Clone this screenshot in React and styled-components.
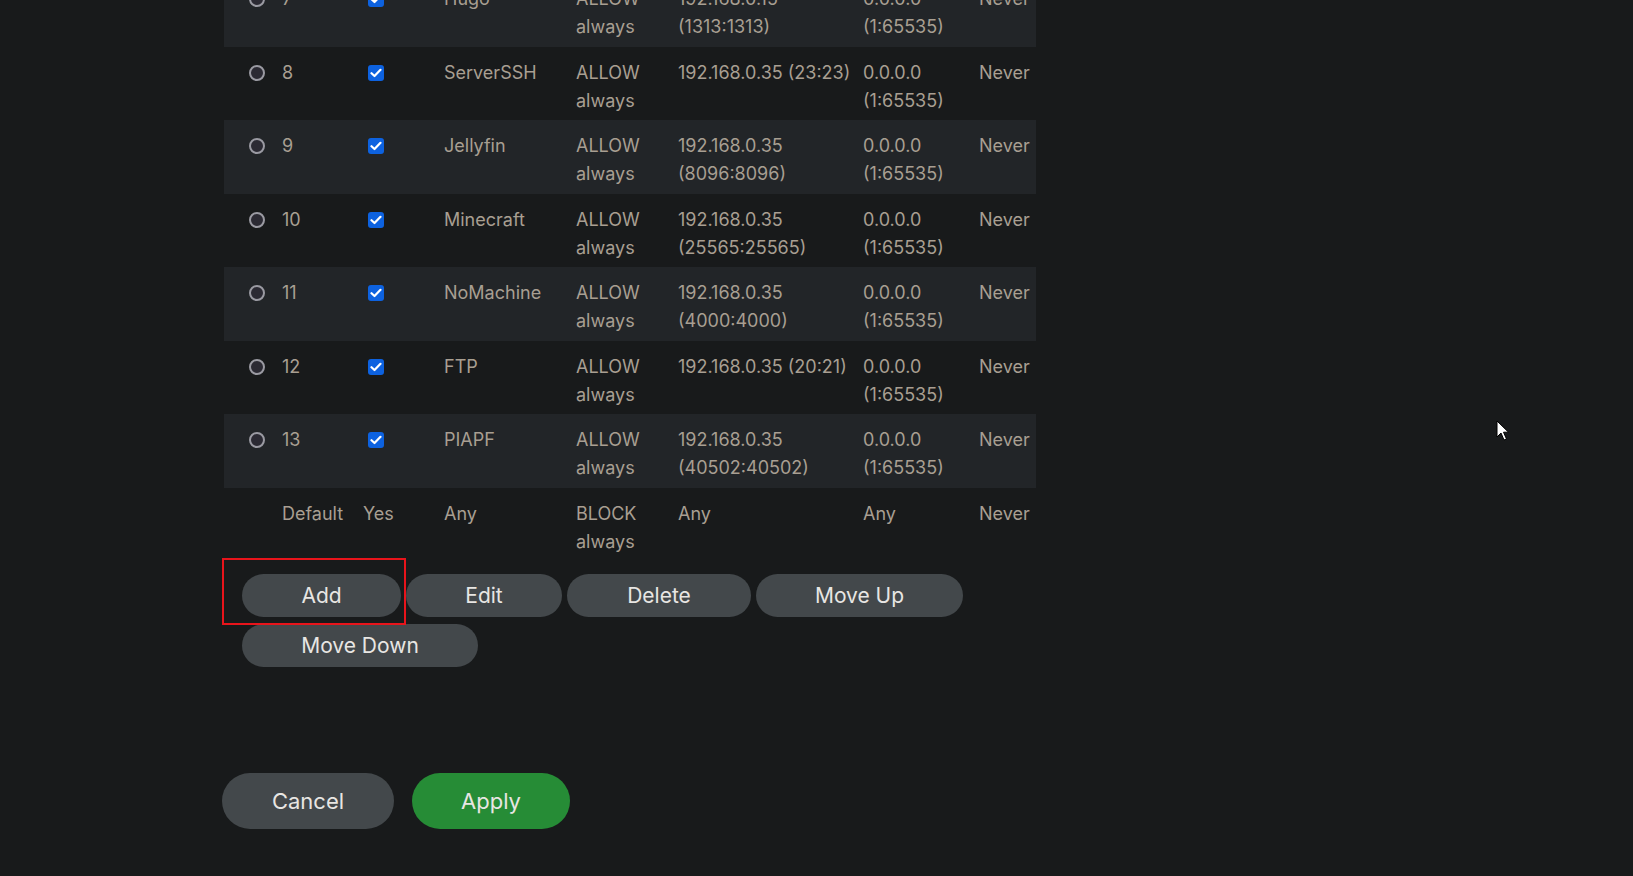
import React from "react";
import styled, { createGlobalStyle } from "styled-components";

const GlobalStyle = createGlobalStyle`
	html, body {
		margin: 0;
		padding: 0;
		background: #181a1b;
		height: 100%;
		overflow: hidden;
	}
	body {
		font-family: Inter, "Noto Sans", sans-serif;
		color: #e8e6e3;
	}
`;

const rules = [
	{ id: 7, name: "Hugo", dest: "192.168.0.15", port: "(1313:1313)" },
	{ id: 8, name: "ServerSSH", dest: "192.168.0.35 (23:23)", port: "" },
	{ id: 9, name: "Jellyfin", dest: "192.168.0.35", port: "(8096:8096)" },
	{ id: 10, name: "Minecraft", dest: "192.168.0.35", port: "(25565:25565)" },
	{ id: 11, name: "NoMachine", dest: "192.168.0.35", port: "(4000:4000)" },
	{ id: 12, name: "FTP", dest: "192.168.0.35 (20:21)", port: "" },
	{ id: 13, name: "PIAPF", dest: "192.168.0.35", port: "(40502:40502)" },
];

export default function App() {
	return (
		<Page>
			<GlobalStyle />
			<Content>
				<Table>
					<colgroup>
						<col style={{ width: 53 }} />
						<col style={{ width: 81 }} />
						<col style={{ width: 81 }} />
						<col style={{ width: 132 }} />
						<col style={{ width: 102 }} />
						<col style={{ width: 185 }} />
						<col style={{ width: 116 }} />
						<col style={{ width: 62 }} />
					</colgroup>
					<tbody>
						{rules.map((r, i) => (
							<Row key={r.id} $alt={i % 2 === 0}>
								<RadioCell>
									<Radio />
								</RadioCell>
								<Cell>{r.id}</Cell>
								<Cell>
									<Check>
										<svg width="12" height="10" viewBox="0 0 12 10">
											<path d="M1.5 5.2 L4.5 8 L10.5 1.8" fill="none" stroke="#fff" strokeWidth="2.2" strokeLinecap="round" strokeLinejoin="round" />
										</svg>
									</Check>
								</Cell>
								<Cell>{r.name}</Cell>
								<Cell>ALLOW<br />always</Cell>
								<Cell>
									{r.dest}
									{r.port && <br />}
									{r.port}
								</Cell>
								<Cell>0.0.0.0<br />(1:65535)</Cell>
								<Cell>Never</Cell>
							</Row>
						))}
						<Row>
							<Cell />
							<Cell>Default</Cell>
							<Cell>Yes</Cell>
							<Cell>Any</Cell>
							<Cell>BLOCK<br />always</Cell>
							<Cell>Any</Cell>
							<Cell>Any</Cell>
							<Cell>Never</Cell>
						</Row>
					</tbody>
				</Table>

				<ButtonBar>
					<Marked>
						<Button $w={159}>Add</Button>
						<RedBox />
					</Marked>
					<Button $w={156}>Edit</Button>
					<Button $w={184}>Delete</Button>
					<Button $w={207}>Move Up</Button>
					<Button $w={236}>Move Down</Button>
				</ButtonBar>

				<Footer>
					<BigButton $w={172}>Cancel</BigButton>
					<BigButton $w={158} $primary>Apply</BigButton>
				</Footer>
			</Content>

			<Cursor width="14" height="22" viewBox="0 0 14 22">
				<path d="M1 1 L1 17 L5 13 L8 20 L10.5 19 L7.5 12.2 L12.5 12.2 Z" fill="#fff" stroke="#000" strokeWidth="1" />
			</Cursor>
		</Page>
	);
}

const Page = styled.div`
	position: relative;
	width: 1633px;
	height: 876px;
	overflow: hidden;
`;

const Content = styled.div`
	width: 812px;
	margin-left: 224px;
	margin-top: -27px;
`;

const Table = styled.table`
	width: 812px;
	border-collapse: collapse;
	table-layout: fixed;
	font-size: 18px;
	line-height: 28px;
	color: #a89f92;
`;

const Row = styled.tr`
	background: ${(p) => (p.$alt ? "#222528" : "transparent")};
	height: 73.5px;
`;

const Cell = styled.td`
	padding: 12px 0 5.5px 5px;
	vertical-align: top;
	white-space: nowrap;
`;

const RadioCell = styled(Cell)`
	padding-left: 25px;
`;

const Radio = styled.span`
	display: block;
	margin-top: 6px;
	width: 12px;
	height: 12px;
	border-radius: 50%;
	border: 2px solid #9a9aa2;
	background: #2b2a33;
`;

const Check = styled.span`
	display: flex;
	align-items: center;
	justify-content: center;
	margin: 6px 0 0 5px;
	width: 16px;
	height: 16px;
	border-radius: 3px;
	background: #0d62e0;
`;

const ButtonBar = styled.div`
	display: flex;
	flex-wrap: wrap;
	column-gap: 5px;
	row-gap: 7px;
	padding-left: 18px;
	margin-top: 13px;
	width: 760px;
`;

const Marked = styled.div`
	position: relative;
	display: flex;
`;

const RedBox = styled.span`
	position: absolute;
	left: -20px;
	right: -5px;
	top: -16px;
	bottom: -8px;
	border: 2px solid #e8141b;
	pointer-events: none;
`;

const Button = styled.button`
	width: ${(p) => p.$w}px;
	height: 43px;
	border: none;
	border-radius: 22px;
	background: #43484b;
	color: #e8e6e3;
	font-family: Inter, "Noto Sans", sans-serif;
	font-size: 21px;
	padding: 0;
	cursor: pointer;
`;

const Footer = styled.div`
	display: flex;
	gap: 18px;
	margin-top: 106px;
	margin-left: -2px;
`;

const BigButton = styled.button`
	width: ${(p) => p.$w}px;
	height: 56px;
	border: none;
	border-radius: 28px;
	background: ${(p) => (p.$primary ? "#268c36" : "#43484b")};
	color: #e8e6e3;
	font-family: Inter, "Noto Sans", sans-serif;
	font-size: 22px;
	padding: 0;
`;

const Cursor = styled.svg`
	position: absolute;
	left: 1496px;
	top: 420px;
`;
